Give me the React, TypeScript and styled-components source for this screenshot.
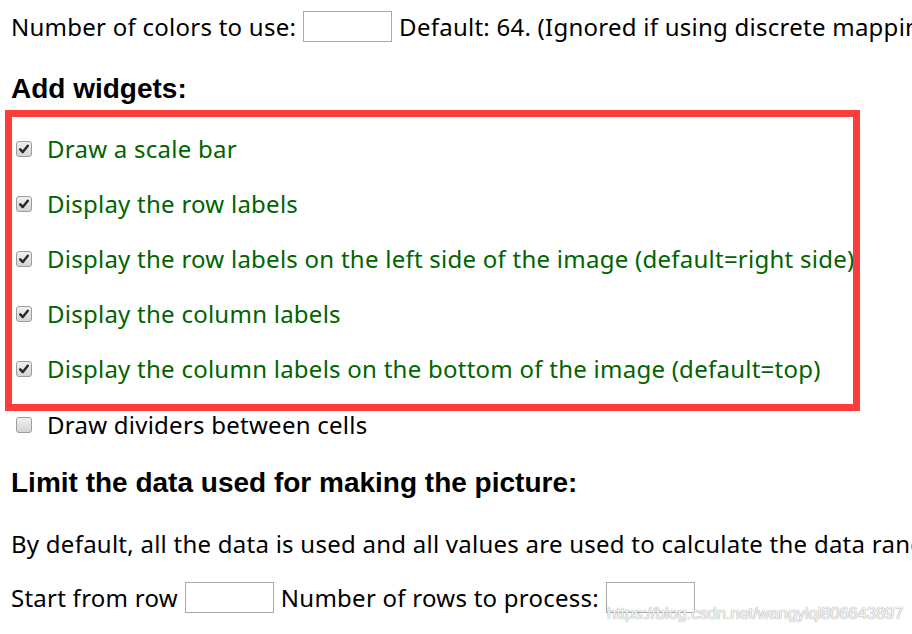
import React from "react";
import styled, { createGlobalStyle } from "styled-components";

const Global = createGlobalStyle`
  html, body {
    margin: 0;
    padding: 0;
    width: 912px;
    height: 634px;
    overflow: hidden;
    background: #ffffff;
  }
  body {
    font-family: "Noto Sans", "Open Sans", sans-serif;
    font-size: 24px;
    letter-spacing: 0.25px;
    color: #000;
  }
`;

const Page = styled.div`
  position: relative;
  width: 912px;
  height: 634px;
  padding-left: 11px;
  box-sizing: border-box;
  overflow: hidden;
`;

const Line = styled.div<{ $h: number; $mt?: number }>`
  display: flex;
  align-items: center;
  height: ${(p) => p.$h}px;
  margin-top: ${(p) => p.$mt ?? 0}px;
  white-space: nowrap;
  gap: 7px;
`;

const TextInput = styled.span<{ $w?: number }>`
  display: inline-block;
  flex: none;
  width: ${(p) => p.$w ?? 89}px;
  height: 31px;
  border: 1px solid #a9a9a9;
  box-sizing: border-box;
  background: #fff;
`;

const Heading = styled.h3<{ $mt: number }>`
  margin: ${(p) => p.$mt}px 0 0 0;
  height: 32px;
  line-height: 32px;
  font-family: "Liberation Sans", Arial, sans-serif;
  font-weight: bold;
  font-size: 28px;
  letter-spacing: 0;
  white-space: nowrap;
`;

const Highlight = styled.div`
  margin: 5px 0 0 -6px;
  width: 855px;
  box-sizing: border-box;
  border: 7px solid #fd3c3c;
  padding: 4px 0 8px 0;
  overflow: hidden;
`;

const OptionRow = styled.label<{ $h: number; $inset: number; $on?: boolean }>`
  display: flex;
  align-items: center;
  height: ${(p) => p.$h}px;
  padding-left: ${(p) => p.$inset}px;
  white-space: nowrap;
  color: ${(p) => (p.$on ? "#006400" : "#000")};
`;

const Box = styled.span`
  flex: none;
  width: 16px;
  height: 16px;
  box-sizing: border-box;
  border: 1px solid #9c9c9c;
  border-radius: 3px;
  background: linear-gradient(#f0f0f0, #d4d4d4);
  margin-right: 15px;
  display: flex;
  align-items: center;
  justify-content: center;
`;

const Watermark = styled.div`
  position: absolute;
  left: 607px;
  top: 604px;
  font-family: "Liberation Sans", Arial, sans-serif;
  font-size: 16.8px;
  color: #f4f4f4;
  text-shadow: 0 0 1px #9a9a9a, 0 0 1px #b0b0b0;
  white-space: nowrap;
  letter-spacing: -0.2px;
`;

const Check = () => (
  <svg width="12" height="12" viewBox="0 0 12 12">
    <path d="M2.2 6.4 L4.8 9 L9.8 2.8" fill="none" stroke="#2a2a2a" strokeWidth="2.5" strokeLinecap="round" strokeLinejoin="round" />
  </svg>
);

const Option = ({ label, on, h, inset }: { label: string; on?: boolean; h: number; inset: number }) => (
  <OptionRow $h={h} $inset={inset} $on={on}>
    <Box>{on && <Check />}</Box>
    {label}
  </OptionRow>
);

const checked = [
  "Draw a scale bar",
  "Display the row labels",
  "Display the row labels on the left side of the image (default=right side)",
  "Display the column labels",
  "Display the column labels on the bottom of the image (default=top)",
];

export default function App() {
  return (
    <Page>
      <Global />
      <Line $h={53}>
        Number of colors to use: <TextInput /> Default: 64. (Ignored if using discrete mapping)
      </Line>
      <Heading $mt={20}>Add widgets:</Heading>
      <Highlight>
        {checked.map((c) => (
          <Option key={c} label={c} on h={55} inset={4} />
        ))}
      </Highlight>
      <Option label="Draw dividers between cells" h={27} inset={5} />
      <Heading $mt={29}>Limit the data used for making the picture:</Heading>
      <Line $h={28} $mt={30}>
        By default, all the data is used and all values are used to calculate the data range.
      </Line>
      <Line $h={31} $mt={25}>
        Start from row <TextInput /> Number of rows to process: <TextInput />
      </Line>
      <Watermark>https://blog.csdn.net/wangyiqi806643897</Watermark>
    </Page>
  );
}
